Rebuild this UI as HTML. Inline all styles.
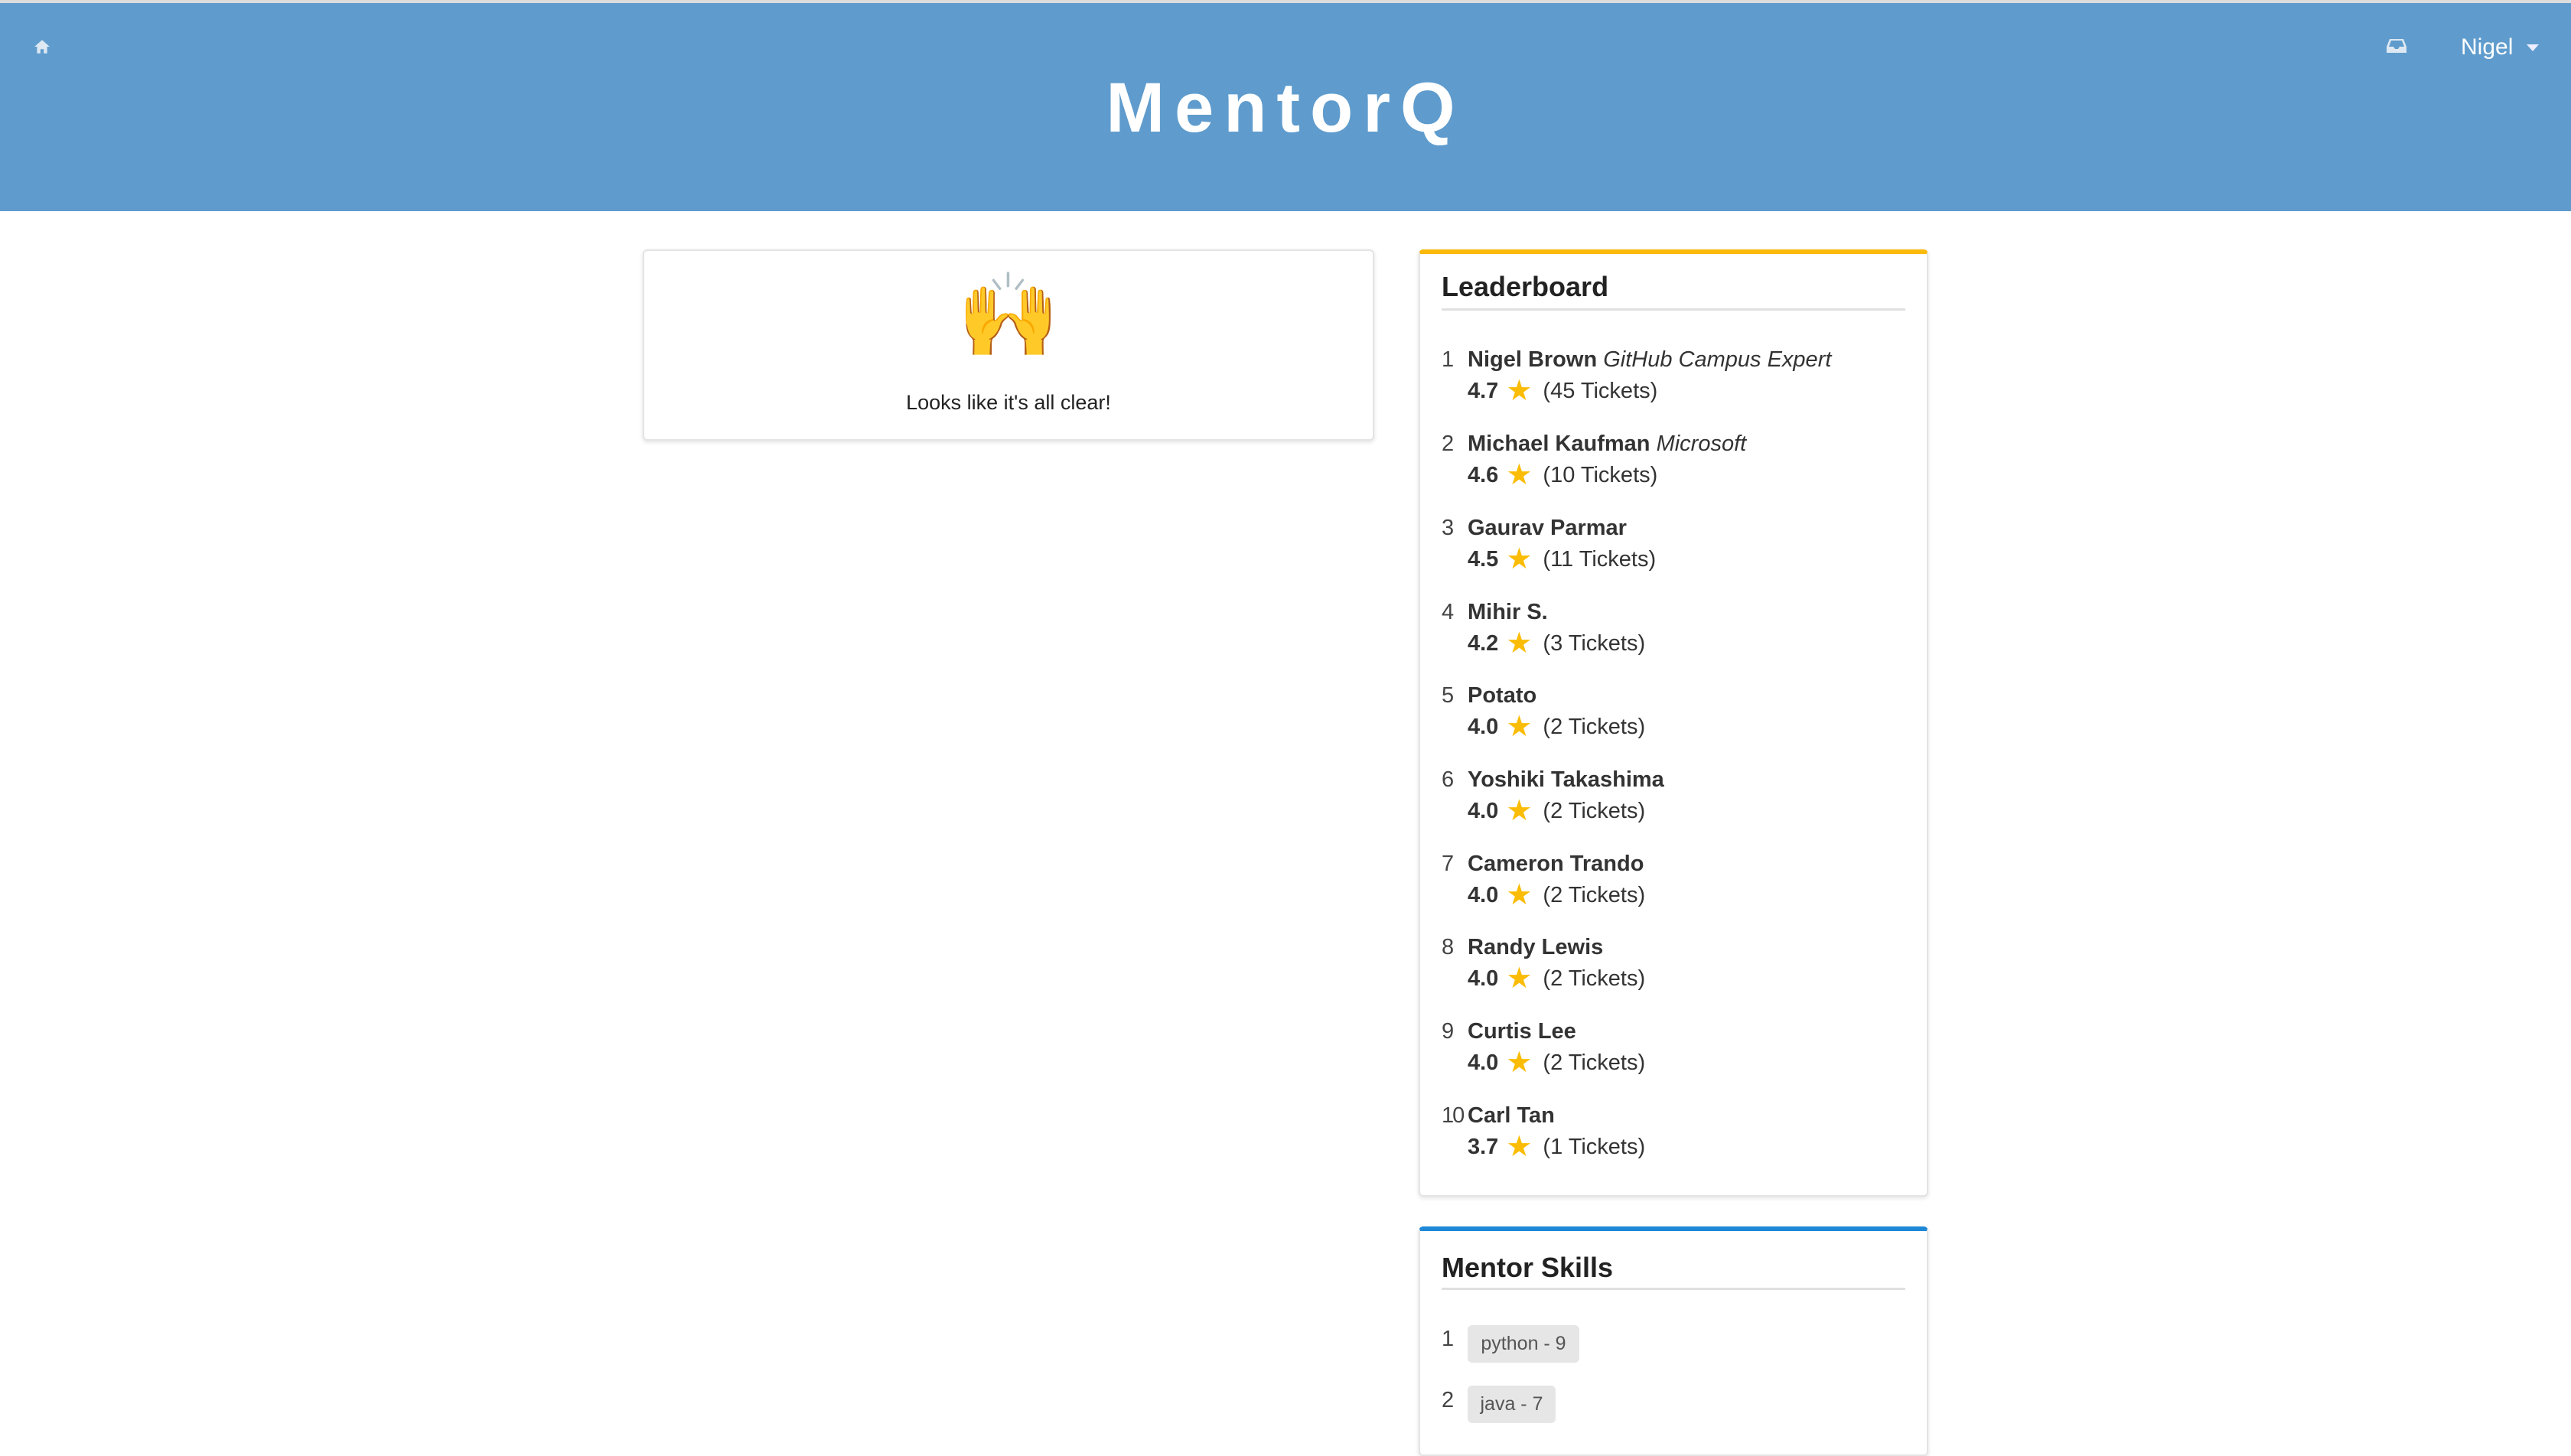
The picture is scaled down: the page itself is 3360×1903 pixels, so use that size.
<!DOCTYPE html>
<html><head><meta charset="utf-8"><style>
*{margin:0;padding:0;box-sizing:border-box}
body{width:3360px;height:1864px;overflow:hidden;background:#fff;font-family:"Liberation Sans",sans-serif;color:#333;position:relative}
.hdr{position:absolute;left:0;top:0;width:3360px;height:276px;background:#5f9ccd;border-top:4px solid #ddd}
.title{position:absolute;left:0;width:3360px;top:82px;text-align:center;color:#fff;font-weight:bold;font-size:92px;letter-spacing:13px;line-height:110px}
.nigel{position:absolute;left:3216px;top:38px;color:#fff;font-size:30px;line-height:40px}
.card{position:absolute;background:#fff;border:2px solid #e4e4e4;border-radius:6px;box-shadow:0 2px 6px rgba(0,0,0,.12)}
.lb{position:absolute;left:1884px;font-size:29px;line-height:40px;color:#333}
.num{position:absolute;left:0;top:0;color:#444}
.nm{position:absolute;left:34px;top:0;white-space:nowrap;font-weight:bold}
.nm i{font-weight:normal}
.rt{position:absolute;left:34px;top:41px;white-space:nowrap}
.rt b{font-weight:bold}
.star{color:#fbbc05;margin:0 14px 0 10px;font-size:38px;vertical-align:-3px}
.h{position:absolute;left:1884px;font-size:36px;font-weight:bold;color:#222}
.hr{position:absolute;left:1884px;width:606px;height:3px;background:#e0e0e0}
.badge{position:absolute;background:#e6e6e6;border-radius:6px;color:#555;font-size:25px;text-align:center;line-height:49px}
</style></head><body>
<div class="hdr">
<svg style="position:absolute;left:44px;top:46px" width="22" height="22" viewBox="0 0 20 20"><path d="M10 2L1 10h3v8h4v-5h4v5h4v-8h3z" fill="#dde8f3"/></svg>
<div class="title">MentorQ</div>
<svg style="position:absolute;left:3119px;top:46px" width="26" height="20" viewBox="0 0 26 20"><path d="M4 1h18l4 10v8H0v-8zM3 11h6l2 3h4l2-3h6l-3-8H6z" fill="#dde8f3"/></svg>
<div class="nigel">Nigel</div>
<svg style="position:absolute;left:3302px;top:54px" width="16" height="9" viewBox="0 0 16 9"><path d="M0 0h16L8 9z" fill="#eef"/></svg>
</div>

<div class="card" style="left:840px;top:326px;width:956px;height:250px">
<div style="position:absolute;left:0;width:100%;top:20px;text-align:center;font-size:108px;line-height:130px;font-family:'Noto Color Emoji','DejaVu Sans',sans-serif">🙌</div>
<div style="position:absolute;left:0;width:100%;top:183px;text-align:center;font-size:27px;color:#222">Looks like it's all clear!</div>
</div>

<div class="card" style="left:1854px;top:326px;width:666px;height:1238px;border-top:6px solid #fbb90a"></div>
<div class="h" style="top:354px">Leaderboard</div>
<div class="hr" style="top:403px"></div>

<div class="lb" style="top:450px"><span class="num">1</span><span class="nm">Nigel Brown <i>GitHub Campus Expert</i></span><span class="rt"><b>4.7</b><span class="star">★</span>(45 Tickets)</span></div>
<div class="lb" style="top:560px"><span class="num">2</span><span class="nm">Michael Kaufman <i>Microsoft</i></span><span class="rt"><b>4.6</b><span class="star">★</span>(10 Tickets)</span></div>
<div class="lb" style="top:670px"><span class="num">3</span><span class="nm">Gaurav Parmar</span><span class="rt"><b>4.5</b><span class="star">★</span>(11 Tickets)</span></div>
<div class="lb" style="top:780px"><span class="num">4</span><span class="nm">Mihir S.</span><span class="rt"><b>4.2</b><span class="star">★</span>(3 Tickets)</span></div>
<div class="lb" style="top:889px"><span class="num">5</span><span class="nm">Potato</span><span class="rt"><b>4.0</b><span class="star">★</span>(2 Tickets)</span></div>
<div class="lb" style="top:999px"><span class="num">6</span><span class="nm">Yoshiki Takashima</span><span class="rt"><b>4.0</b><span class="star">★</span>(2 Tickets)</span></div>
<div class="lb" style="top:1109px"><span class="num">7</span><span class="nm">Cameron Trando</span><span class="rt"><b>4.0</b><span class="star">★</span>(2 Tickets)</span></div>
<div class="lb" style="top:1218px"><span class="num">8</span><span class="nm">Randy Lewis</span><span class="rt"><b>4.0</b><span class="star">★</span>(2 Tickets)</span></div>
<div class="lb" style="top:1328px"><span class="num">9</span><span class="nm">Curtis Lee</span><span class="rt"><b>4.0</b><span class="star">★</span>(2 Tickets)</span></div>
<div class="lb" style="top:1438px"><span class="num" style="letter-spacing:-2px">10</span><span class="nm">Carl Tan</span><span class="rt"><b>3.7</b><span class="star">★</span>(1 Tickets)</span></div>

<div class="card" style="left:1854px;top:1603px;width:666px;height:300px;border-top:6px solid #1e88d6"></div>
<div class="h" style="top:1636px">Mentor Skills</div>
<div class="hr" style="top:1683px"></div>
<div class="lb" style="top:1730px"><span class="num">1</span></div>
<div class="badge" style="left:1918px;top:1732px;width:146px">python - 9</div>
<div class="lb" style="top:1810px"><span class="num">2</span></div>
<div class="badge" style="left:1918px;top:1811px;width:115px">java - 7</div>
</body></html>
